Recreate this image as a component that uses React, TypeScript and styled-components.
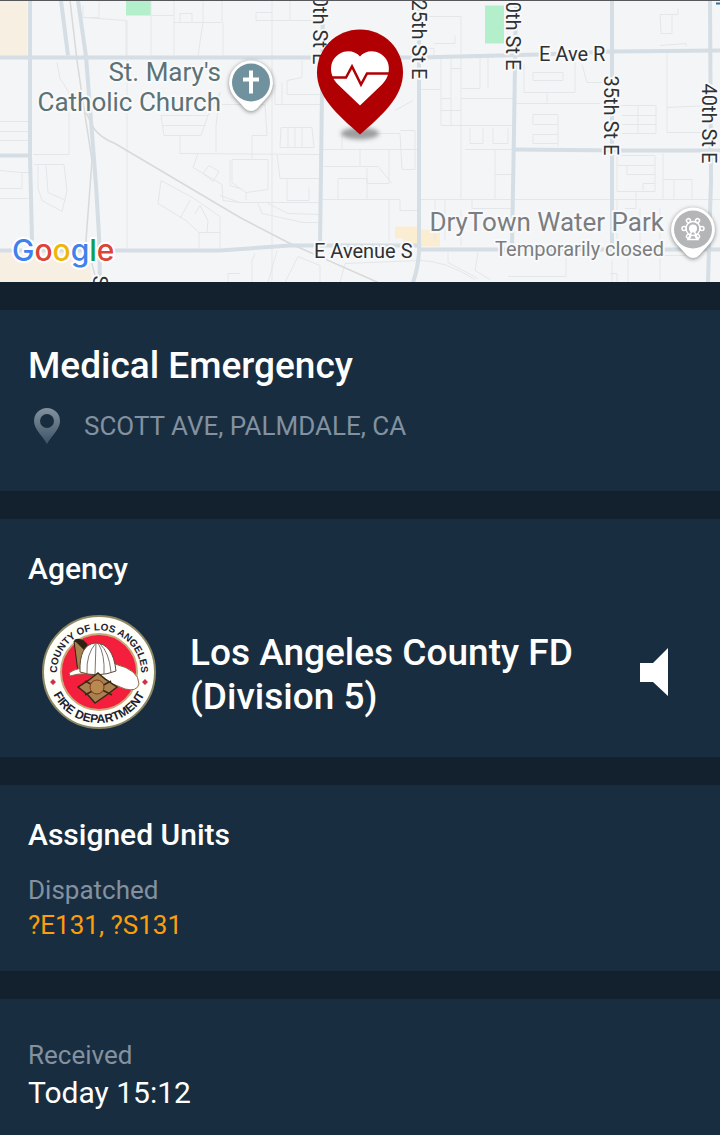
import styled, { createGlobalStyle } from "styled-components";

const GlobalStyle = createGlobalStyle`
  * {
    box-sizing: border-box;
  }
  body {
    margin: 0;
    background-color: #12212d;
    font-family: Roboto, "Liberation Sans", sans-serif;
  }
`;

const mainRoads = [
  "M30 0 V155 L32 240",
  "M0 57 H420 L540 54 L612 51 L720 50",
  "M0 155 H31",
  "M78 0 L86 56 L91 120 L96 185 L99 235 L100 282",
  "M61 0 L68 55",
  "M0 250 H220 L290 245 H420",
  "M420 249 H720",
  "M323 0 L322 90 L320 245",
  "M419 0 V240 Q420 262 413 282",
  "M516 0 L514 130 L512 245",
  "M612 0 V245",
  "M515 149 L620 150 H720",
  "M710 0 L711 180 L708 282",
];

const sideRoads = [
  "M83 5 V17 H99 V0 M83 17 L126 20 V55 M151 0 V55 M151 15 H174 M174 0 V55 M174 22 H222 V0 M180 22 V13 H192 V22 M203 0 V22 L198 55 M223 22 V55",
  "M57 62 L60 78 L69 92 V154 H33 M0 121 H31 M0 131 H31 M0 140 H31 M0 170 L22 172 V188 H0 M22 172 H31 M0 198 H31",
  "M34 164 H64 L67 190 L62 211 L42 200 L38 188 V164 M46 164 L48 192 L66 200",
  "M127 20 V248 M161 115 L164 135 H201 L208 115 Z M162 125 H206 M180 135 V153 L320 154 M208 115 L220 92 L216 125 V152",
  "M198 153 L193 167 L222 184 L223 200 L240 202 M203 173 L209 165 L219 171 L213 181 Z M161 180 L158 203 L186 220 L199 232 V248 M161 180 L194 198 L220 216 V248 M180 218 L190 200 M199 232 H220 M195 213 L200 205 L208 220 L207 232 M230 160 V185 L240 188",
  "M222 104 H265 M257 85 H275 V104 H321 M282 82 V104 M302 60 V77 L287 80 V94 H320 M265 104 L267 135 H252 V158 M281 127 H312 L314 147 H280 Z M288 127 V147 M295 127 V147 M302 127 V147",
  "M232 159 H268 V189 L246 192 L232 182 Z M246 192 V200 M277 154 L280 178 H320 M287 178 V200 H309 V187 M220 195 L240 202 H320 M258 203 L262 213 L303 222 H320 M268 203 L288 213 L320 214",
  "M272 0 V280 M256 12 V20 H290 V0 M256 12 H272 M290 20 H321",
  "M321 149 H419 M321 166 H378 L392 183 M338 200 V178 H367 V198 M367 168 V183 H389 V149 M342 149 V133 H400 L402 169 H415 V130 H400 M360 149 V166 M321 199 H400 V210 H419 M389 199 V240 M395 110 L413 100",
  "M419 16 H461 V57 M420 47 L434 48 V57 M434 43 H455 V35 M441 57 V125 H461 M451 57 V125 M461 57 V200 M419 89 H440 M461 98 H514 M441 98 H451 M441 110 H461 M451 68 H461 M480 57 V88 H462 M488 57 V88",
  "M461 125 H514 M470 128 V143 H483 V128 M493 128 V143 H508 V128 M465 149 H515 M495 149 V198 M495 174 H513 M419 199 H720 M435 200 V240 M445 200 V240 M472 200 V208 H514 M461 210 V245",
  "M524 64 V92 H575 V60 M533 72 H563 V80 H533 Z M514 103 H558 M558 103 H600 M547 92 V103 M582 64 L587 82 H610 M533 114 H558 V146 M533 124 H558 M533 114 V124 M533 134 V143 H558 M533 134 H558",
  "M660 14 H678 V8 M660 14 L661 33 H672 V14 M660 45 L686 43 V46 M620 105 H656 V133 H622 M638 105 V133 M622 115 H656 M622 124 H656 M667 52 V132 H710 M667 107 L710 105",
  "M617 155 V191 H655 V155 Z M627 165 V174 H655 M617 165 H655 M643 190 V183 H655 M663 153 V199 M663 179 H692 V198 M674 179 V198 M636 191 V208 H625 M617 200 V245 M640 208 V245 M660 208 V280",
  "M420 260 Q445 260 475 279 M448 262 L478 278 M448 252 V262 M478 252 L475 270 L490 279 M508 276 H566 V250 M612 260 V282 M628 250 V282 M630 255 H700 M610 273 H617 V282",
  "M228 282 V273 H240 M252 282 V260 L255 253 M268 282 L277 250 M285 282 L298 256 L320 265 V282 M340 282 L345 263 L420 260",
];

const streets = [
  { name: "20th St E", x: 313, y: -16, angle: 90 },
  { name: "25th St E", x: 412, y: -1, angle: 90 },
  { name: "30th St E", x: 506, y: -10, angle: 90 },
  { name: "35th St E", x: 604, y: 75, angle: 90 },
  { name: "40th St E", x: 702, y: 83, angle: 90 },
  { name: "E Ave R", x: 539, y: 60, angle: 0 },
  { name: "E Avenue S", x: 314, y: 257, angle: 0 },
  { name: "S", x: 93, y: 275, angle: 90 },
];

const petals = [0, 60, 120, 180, 240, 300];

const CityMap = () => (
  <MapCanvas
    viewBox="0 0 720 282"
    preserveAspectRatio="xMidYMid slice"
    role="img"
    aria-label="Incident map"
  >
    <rect width="720" height="282" fill="#f4f5f6" />
    <path d="M0 0 H27 V56 H0 Z M0 252 H88 L92 282 H0 Z" fill="#f7efe1" />
    <path d="M126 0 H151 V15 H126 Z M485 5 H504 V43 H485 Z" fill="#b4efcb" />
    <path d="M395 226 H417 V246 H403 V238 H395 Z M420 229 H440 V246 H420 Z" fill="#fbedd2" />
    {sideRoads.map((d) => (
      <path key={d} d={d} fill="none" stroke="#e4e7ea" strokeWidth="1" />
    ))}
    <path
      d="M70 0 L77 60 L84 108 L94 128 Q100 137 115 143 L240 217 L290 243 L378 282 M84 108 L92 160 L86 240 L95 275"
      fill="none"
      stroke="#d9d9da"
      strokeWidth="1.5"
    />
    {mainRoads.map((d) => (
      <path key={d} d={d} fill="none" stroke="#d5dee4" strokeWidth="4" />
    ))}
    <path d="M716 3 H720" stroke="#2f6f9f" strokeWidth="2" />

    {streets.map(({ name, x, y, angle }) => (
      <StreetName key={name} transform={`translate(${x} ${y}) rotate(${angle})`}>
        {name}
      </StreetName>
    ))}

    <PlaceName x="221" y="80" $color="#5b7277">
      St. Mary's
    </PlaceName>
    <PlaceName x="221" y="110" $color="#5b7277">
      Catholic Church
    </PlaceName>
    <PlaceName x="664" y="230" $color="#7b7d80">
      DryTown Water Park
    </PlaceName>
    <PlaceNote x="664" y="255">
      Temporarily closed
    </PlaceNote>

    <PlacePin transform="translate(251 82)">
      <path d="M0 -22 A22 22 0 0 1 16 15 L6 26 Q0 31 -6 26 L-16 15 A22 22 0 0 1 0 -22 Z" fill="#fff" />
      <circle r="19" fill="#6f929e" />
      <path d="M-2 -12 H2 V-5 H8 V-1 H2 V11 H-2 V-1 H-8 V-5 H-2 Z" fill="#fff" />
    </PlacePin>
    <PlacePin transform="translate(693 229)">
      <path d="M0 -22 A22 22 0 0 1 16 15 L6 26 Q0 31 -6 26 L-16 15 A22 22 0 0 1 0 -22 Z" fill="#fff" />
      <circle r="19" fill="#b3b5b6" />
      <g fill="none" stroke="#fff" strokeWidth="1.5" transform="translate(0 -1)">
        <circle r="7" />
        {petals.map((deg) => (
          <circle key={deg} cy="-9" r="2" fill="#b3b5b6" transform={`rotate(${deg + 30})`} />
        ))}
        <path d="M0 0 L-5 11 H5 Z" />
      </g>
      <circle cy="-1" r="4" fill="#fff" />
    </PlacePin>

    <PinShadow cx="360" cy="133" rx="19" ry="6" />
    <path
      d="M360 29 C384 29 403 48 403 72 C403 96 383 114 360 134 C337 114 317 96 317 72 C317 48 336 29 360 29 Z"
      fill="#b00003"
    />
    <path
      d="M360 105 L338 84 C328 74 329 59 340 53 C347 49 356 51 360 56 C364 51 373 49 380 53 C391 59 392 74 382 84 Z"
      fill="#fff"
    />
    <path
      d="M332 77 H346 L352 66 L361 84 L367 73 H390"
      fill="none"
      stroke="#b00003"
      strokeWidth="2.5"
    />

    <GoogleMark x="12" y="260">
      <tspan fill="#4081ec">G</tspan>
      <tspan fill="#dc4437">o</tspan>
      <tspan fill="#eeb60c">o</tspan>
      <tspan fill="#4081ec">g</tspan>
      <tspan fill="#109d58">l</tspan>
      <tspan fill="#dc4437">e</tspan>
    </GoogleMark>
  </MapCanvas>
);

const Seal = () => (
  <SealIcon viewBox="1 1 114 114" role="img" aria-label="County of Los Angeles Fire Department">
    <defs>
      <path id="seal-top" d="M22 80 A42 42 0 1 1 94 80" />
      <path id="seal-bottom" d="M7 58 A51 51 0 0 0 109 58" />
    </defs>
    <circle cx="58" cy="58" r="56" fill="#fffffa" stroke="#8d8763" strokeWidth="2" />
    <circle cx="58" cy="58" r="38" fill="#f41f3c" stroke="#c9a87c" strokeWidth="2" />
    <SealText $size={10}>
      <textPath href="#seal-top" startOffset="50%">
        COUNTY OF LOS ANGELES
      </textPath>
    </SealText>
    <SealText $size={12}>
      <textPath href="#seal-bottom" startOffset="50%">
        FIRE DEPARTMENT
      </textPath>
    </SealText>
    <path d="M12 65 L15 68 L12 71 L9 68 Z M104 65 L107 68 L104 71 L101 68 Z" fill="#cb3149" />
    <path d="M33 27 L44 30 L46 58 L37 58 Z" fill="#a8824e" stroke="#2d2115" strokeWidth="1" />
    <path d="M33 26 Q40 22 47 31 L43 36 Z" fill="#2d2115" />
    <path
      d="M28 59 Q38 52 47 56 L74 50 Q98 56 98 70 Q96 78 84 75 Q71 71 62 63 Q44 57 29 62 Z"
      fill="#fff"
      stroke="#8a6b45"
      strokeWidth="1"
    />
    <path
      d="M39 58 Q38 31 54 29 Q72 29 75 57 Q57 64 39 58 Z"
      fill="#fff"
      stroke="#5d4c36"
      strokeWidth="1"
    />
    <path d="M55 29 Q45 40 46 59 M55 29 L54 60 M57 29 Q64 40 63 60 M59 30 Q68 38 70 58" fill="none" stroke="#80756a" strokeWidth="1" />
    <path
      d="M57 59 L64 65 L76 73 L67 80 L54 89 L47 81 L37 73 L48 66 Z"
      fill="#a8824e"
      stroke="#3b2814"
      strokeWidth="1.5"
    />
    <path d="M44 67 L71 81 M70 67 L44 81" stroke="#3b2814" strokeWidth="1.5" />
    <circle cx="56" cy="73" r="7" fill="#b78b50" stroke="#8b3023" strokeWidth="1" />
  </SealIcon>
);

const App = () => {
  return (
    <Page>
      <GlobalStyle />
      <MapFrame>
        <CityMap />
      </MapFrame>

      <Card>
        <Title>Medical Emergency</Title>
        <Location>
          <PinIcon viewBox="0 0 26 36" aria-hidden="true">
            <defs>
              <linearGradient id="pin-shade" x1="0" y1="0" x2="0" y2="1">
                <stop offset="0" stopColor="#8492a0" />
                <stop offset="1" stopColor="#3c5467" />
              </linearGradient>
            </defs>
            <path
              fillRule="evenodd"
              fill="url(#pin-shade)"
              d="M13 0 A13 13 0 0 1 26 13 C26 21 18 27 13 36 C8 27 0 21 0 13 A13 13 0 0 1 13 0 Z M13 6 A7 7 0 0 0 13 20 A7 7 0 0 0 13 6 Z"
            />
          </PinIcon>
          <Address>SCOTT AVE, PALMDALE, CA</Address>
        </Location>
      </Card>

      <Card>
        <Heading>Agency</Heading>
        <AgencyRow>
          <Seal />
          <AgencyName>
            Los Angeles County FD
            <br />
            (Division 5)
          </AgencyName>
          <SoundButton type="button" aria-label="Listen to agency">
            <svg width="28" height="48" viewBox="0 0 28 48" aria-hidden="true">
              <path d="M0 15 H13 L28 0 V48 L13 34 H0 Z" fill="#fff" />
            </svg>
          </SoundButton>
        </AgencyRow>
      </Card>

      <Card>
        <Heading>Assigned Units</Heading>
        <Units>
          <Label>Dispatched</Label>
          <UnitList>?E131, ?S131</UnitList>
        </Units>
      </Card>

      <Card>
        <Received>
          <Label>Received</Label>
          <Time>Today 15:12</Time>
        </Received>
      </Card>
    </Page>
  );
};

export default App;

const Page = styled.main`
  display: flex;
  flex-direction: column;
  gap: 28px;
  color: #fff;
`;
const MapFrame = styled.div`
  height: 282px;
  overflow: hidden;
  border-top: 1px solid #56585c;
`;
const MapCanvas = styled.svg`
  display: block;
  width: 100%;
  height: 100%;
`;
const StreetName = styled.text`
  font-size: 20px;
  fill: #2f3133;
  stroke: #f8f9fa;
  stroke-width: 4px;
  stroke-linejoin: round;
  paint-order: stroke;
`;
const PlaceName = styled.text<{ $color: string }>`
  font-size: 26px;
  text-anchor: end;
  fill: ${({ $color }) => $color};
  stroke: #f8f9fa;
  stroke-width: 4px;
  stroke-linejoin: round;
  paint-order: stroke;
`;
const PlaceNote = styled.text`
  font-size: 20px;
  text-anchor: end;
  fill: #7b7d80;
  stroke: #f8f9fa;
  stroke-width: 4px;
  stroke-linejoin: round;
  paint-order: stroke;
`;
const PlacePin = styled.g`
  filter: drop-shadow(0 1px 2px rgba(0, 0, 0, 0.45));
`;
const PinShadow = styled.ellipse`
  fill: #9c9ea1;
  filter: blur(2px);
`;
const GoogleMark = styled.text`
  font-family: Inter, Roboto, sans-serif;
  font-size: 30px;
  font-weight: 500;
  stroke: #fff;
  stroke-width: 4px;
  stroke-linejoin: round;
  paint-order: stroke;
`;
const Card = styled.section`
  background-color: #182e40;
  padding: 32px 28px 28px;
`;
const Title = styled.h1`
  margin: 0;
  font-size: 37px;
  font-weight: 500;
  line-height: 48px;
`;
const Location = styled.div`
  display: flex;
  align-items: center;
  gap: 24px;
  margin-top: 16px;
  padding: 0 6px 17px;
`;
const PinIcon = styled.svg`
  width: 26px;
  height: 36px;
`;
const Address = styled.span`
  font-size: 26px;
  line-height: 40px;
  color: #8391a0;
`;
const Heading = styled.h2`
  margin: 0;
  font-size: 30px;
  font-weight: 500;
  line-height: 36px;
`;
const AgencyRow = styled.div`
  display: flex;
  align-items: center;
  gap: 34px;
  margin-top: 28px;
  padding: 0 24px 0 14px;
`;
const SealIcon = styled.svg`
  flex: none;
  width: 114px;
  height: 114px;
`;
const SealText = styled.text<{ $size: number }>`
  font-family: "Liberation Sans", Arial, sans-serif;
  font-size: ${({ $size }) => $size}px;
  font-weight: 700;
  text-anchor: middle;
  fill: #1d2130;
`;
const AgencyName = styled.p`
  flex: 1;
  margin: 0;
  padding-top: 6px;
  font-size: 37px;
  font-weight: 500;
  line-height: 44px;
`;
const SoundButton = styled.button`
  display: flex;
  padding: 0;
  border: 0;
  background: none;
  cursor: pointer;
`;
const Units = styled.div`
  margin-top: 20px;
`;
const Label = styled.div`
  font-size: 26px;
  line-height: 35px;
  color: #8391a0;
`;
const UnitList = styled.div`
  font-size: 26px;
  line-height: 35px;
  color: #ff9d0a;
`;
const Received = styled.div`
  padding: 7px 0;
`;
const Time = styled.div`
  font-size: 30px;
  line-height: 40px;
`;
